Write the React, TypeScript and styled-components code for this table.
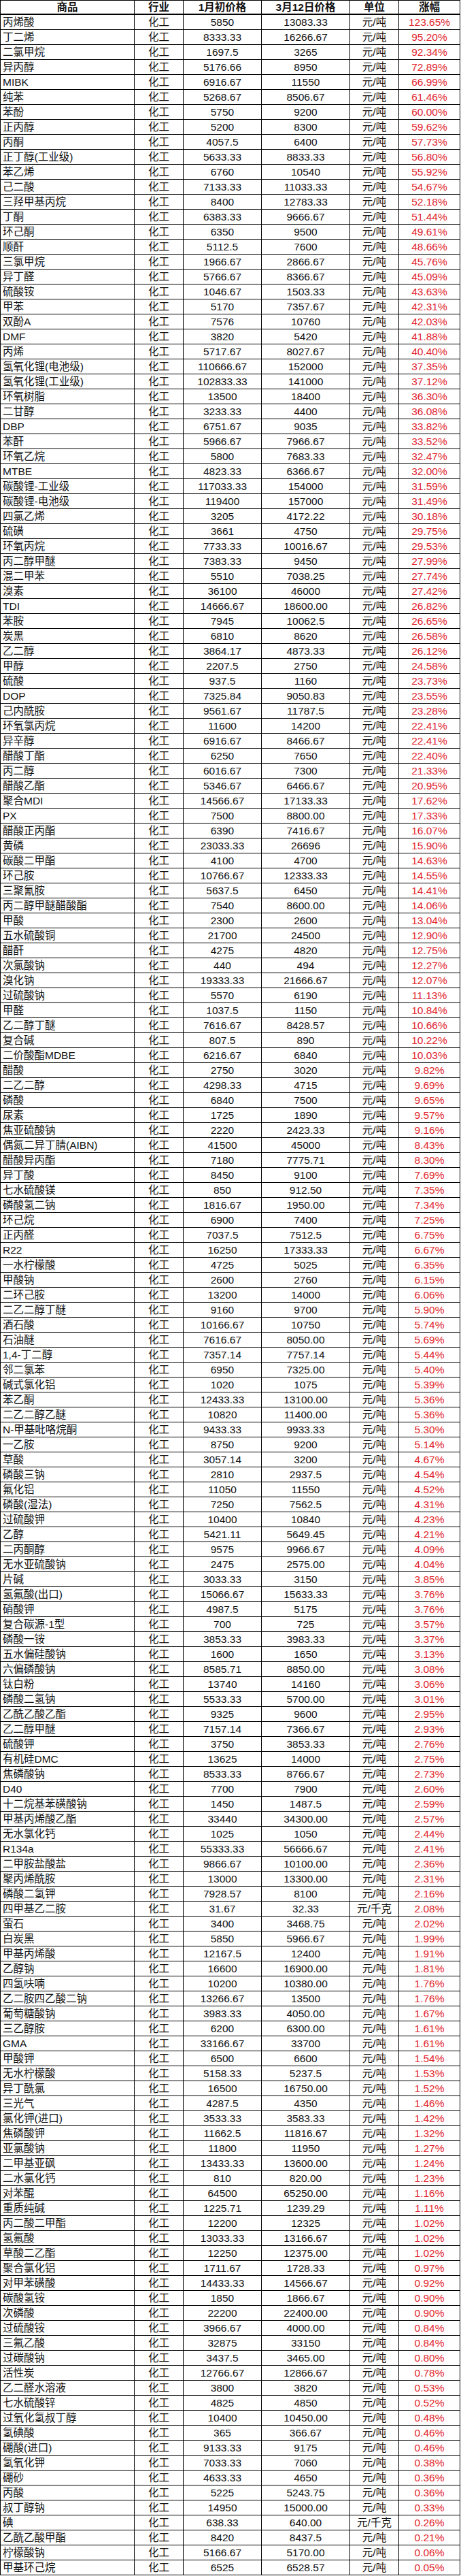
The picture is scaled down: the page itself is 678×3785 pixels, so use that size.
import type { FC } from "react";
import styled, { createGlobalStyle } from "styled-components";

const GlobalStyle = createGlobalStyle`
  html, body {
    margin: 0;
    padding: 0;
    background: #fff;
  }
  body {
    font-family: "Liberation Sans", "Noto Sans CJK SC", sans-serif;
    color: #000;
  }
`;

// 商品|1月初价格|3月12日价格|涨幅  (单位 defaults to 元/吨, "k" = 元/千克)
const RAW = `丙烯酸|5850|13083.33|123.65%
丁二烯|8333.33|16266.67|95.20%
二氯甲烷|1697.5|3265|92.34%
异丙醇|5176.66|8950|72.89%
MIBK|6916.67|11550|66.99%
纯苯|5268.67|8506.67|61.46%
苯酚|5750|9200|60.00%
正丙醇|5200|8300|59.62%
丙酮|4057.5|6400|57.73%
正丁醇(工业级)|5633.33|8833.33|56.80%
苯乙烯|6760|10540|55.92%
己二酸|7133.33|11033.33|54.67%
三羟甲基丙烷|8400|12783.33|52.18%
丁酮|6383.33|9666.67|51.44%
环己酮|6350|9500|49.61%
顺酐|5112.5|7600|48.66%
三氯甲烷|1966.67|2866.67|45.76%
异丁醛|5766.67|8366.67|45.09%
硫酸铵|1046.67|1503.33|43.63%
甲苯|5170|7357.67|42.31%
双酚A|7576|10760|42.03%
DMF|3820|5420|41.88%
丙烯|5717.67|8027.67|40.40%
氢氧化锂(电池级)|110666.67|152000|37.35%
氢氧化锂(工业级)|102833.33|141000|37.12%
环氧树脂|13500|18400|36.30%
二甘醇|3233.33|4400|36.08%
DBP|6751.67|9035|33.82%
苯酐|5966.67|7966.67|33.52%
环氧乙烷|5800|7683.33|32.47%
MTBE|4823.33|6366.67|32.00%
碳酸锂-工业级|117033.33|154000|31.59%
碳酸锂-电池级|119400|157000|31.49%
四氯乙烯|3205|4172.22|30.18%
硫磺|3661|4750|29.75%
环氧丙烷|7733.33|10016.67|29.53%
丙二醇甲醚|7383.33|9450|27.99%
混二甲苯|5510|7038.25|27.74%
溴素|36100|46000|27.42%
TDI|14666.67|18600.00|26.82%
苯胺|7945|10062.5|26.65%
炭黑|6810|8620|26.58%
乙二醇|3864.17|4873.33|26.12%
甲醇|2207.5|2750|24.58%
硫酸|937.5|1160|23.73%
DOP|7325.84|9050.83|23.55%
己内酰胺|9561.67|11787.5|23.28%
环氧氯丙烷|11600|14200|22.41%
异辛醇|6916.67|8466.67|22.41%
醋酸丁酯|6250|7650|22.40%
丙二醇|6016.67|7300|21.33%
醋酸乙酯|5346.67|6466.67|20.95%
聚合MDI|14566.67|17133.33|17.62%
PX|7500|8800.00|17.33%
醋酸正丙酯|6390|7416.67|16.07%
黄磷|23033.33|26696|15.90%
碳酸二甲酯|4100|4700|14.63%
环己胺|10766.67|12333.33|14.55%
三聚氰胺|5637.5|6450|14.41%
丙二醇甲醚醋酸酯|7540|8600.00|14.06%
甲酸|2300|2600|13.04%
五水硫酸铜|21700|24500|12.90%
醋酐|4275|4820|12.75%
次氯酸钠|440|494|12.27%
溴化钠|19333.33|21666.67|12.07%
过硫酸钠|5570|6190|11.13%
甲醛|1037.5|1150|10.84%
乙二醇丁醚|7616.67|8428.57|10.66%
复合碱|807.5|890|10.22%
二价酸酯MDBE|6216.67|6840|10.03%
醋酸|2750|3020|9.82%
二乙二醇|4298.33|4715|9.69%
磷酸|6840|7500|9.65%
尿素|1725|1890|9.57%
焦亚硫酸钠|2220|2423.33|9.16%
偶氮二异丁腈(AIBN)|41500|45000|8.43%
醋酸异丙酯|7180|7775.71|8.30%
异丁酸|8450|9100|7.69%
七水硫酸镁|850|912.50|7.35%
磷酸氢二钠|1816.67|1950.00|7.34%
环己烷|6900|7400|7.25%
正丙醛|7037.5|7512.5|6.75%
R22|16250|17333.33|6.67%
一水柠檬酸|4725|5025|6.35%
甲酸钠|2600|2760|6.15%
二环己胺|13200|14000|6.06%
二乙二醇丁醚|9160|9700|5.90%
酒石酸|10166.67|10750|5.74%
石油醚|7616.67|8050.00|5.69%
1,4-丁二醇|7357.14|7757.14|5.44%
邻二氯苯|6950|7325.00|5.40%
碱式氯化铝|1020|1075|5.39%
苯乙酮|12433.33|13100.00|5.36%
二乙二醇乙醚|10820|11400.00|5.36%
N-甲基吡咯烷酮|9433.33|9933.33|5.30%
一乙胺|8750|9200|5.14%
草酸|3057.14|3200|4.67%
磷酸三钠|2810|2937.5|4.54%
氟化铝|11050|11550|4.52%
磷酸(湿法)|7250|7562.5|4.31%
过硫酸钾|10400|10840|4.23%
乙醇|5421.11|5649.45|4.21%
二丙酮醇|9575|9966.67|4.09%
无水亚硫酸钠|2475|2575.00|4.04%
片碱|3033.33|3150|3.85%
氢氟酸(出口)|15066.67|15633.33|3.76%
硝酸钾|4987.5|5175|3.76%
复合碳源-1型|700|725|3.57%
磷酸一铵|3853.33|3983.33|3.37%
五水偏硅酸钠|1600|1650|3.13%
六偏磷酸钠|8585.71|8850.00|3.08%
钛白粉|13740|14160|3.06%
磷酸二氢钠|5533.33|5700.00|3.01%
乙酰乙酸乙酯|9325|9600|2.95%
乙二醇甲醚|7157.14|7366.67|2.93%
硫酸钾|3750|3853.33|2.76%
有机硅DMC|13625|14000|2.75%
焦磷酸钠|8533.33|8766.67|2.73%
D40|7700|7900|2.60%
十二烷基苯磺酸钠|1450|1487.5|2.59%
甲基丙烯酸乙酯|33440|34300.00|2.57%
无水氯化钙|1025|1050|2.44%
R134a|55333.33|56666.67|2.41%
二甲胺盐酸盐|9866.67|10100.00|2.36%
聚丙烯酰胺|13000|13300.00|2.31%
磷酸二氢钾|7928.57|8100|2.16%
四甲基乙二胺|31.67|32.33|2.08%|k
萤石|3400|3468.75|2.02%
白炭黑|5850|5966.67|1.99%
甲基丙烯酸|12167.5|12400|1.91%
乙醇钠|16600|16900.00|1.81%
四氢呋喃|10200|10380.00|1.76%
乙二胺四乙酸二钠|13266.67|13500|1.76%
葡萄糖酸钠|3983.33|4050.00|1.67%
三乙醇胺|6200|6300.00|1.61%
GMA|33166.67|33700|1.61%
甲酸钾|6500|6600|1.54%
无水柠檬酸|5158.33|5237.5|1.53%
异丁酰氯|16500|16750.00|1.52%
三光气|4287.5|4350|1.46%
氯化钾(进口)|3533.33|3583.33|1.42%
焦磷酸钾|11662.5|11816.67|1.32%
亚氯酸钠|11800|11950|1.27%
二甲基亚砜|13433.33|13600.00|1.24%
二水氯化钙|810|820.00|1.23%
对苯醌|64500|65250.00|1.16%
重质纯碱|1225.71|1239.29|1.11%
丙二酸二甲酯|12200|12325|1.02%
氢氟酸|13033.33|13166.67|1.02%
草酸二乙酯|12250|12375.00|1.02%
聚合氯化铝|1711.67|1728.33|0.97%
对甲苯磺酸|14433.33|14566.67|0.92%
碳酸氢铵|1850|1866.67|0.90%
次磷酸|22200|22400.00|0.90%
过硫酸铵|3966.67|4000.00|0.84%
三氟乙酸|32875|33150|0.84%
过碳酸钠|3437.5|3465.00|0.80%
活性炭|12766.67|12866.67|0.78%
乙二醛水溶液|3800|3820|0.53%
七水硫酸锌|4825|4850|0.52%
过氧化氢叔丁醇|10400|10450.00|0.48%
氢碘酸|365|366.67|0.46%
硼酸(进口)|9133.33|9175|0.46%
氢氧化钾|7033.33|7060|0.38%
硼砂|4633.33|4650|0.36%
丙酸|5225|5243.75|0.36%
叔丁醇钠|14950|15000.00|0.33%
碘|638.33|640.00|0.26%|k
乙酰乙酸甲酯|8420|8437.5|0.21%
柠檬酸钠|5166.67|5170.00|0.06%
甲基环己烷|6525|6528.57|0.05%`;

interface Item {
  name: string;
  start: string;
  end: string;
  change: string;
  unit: string;
}

const items: Item[] = RAW.split("\n").map((line) => {
  const [name, start, end, change, u] = line.split("|");
  return { name, start, end, change, unit: u === "k" ? "元/千克" : "元/吨" };
});

const COLS = "197px 72px 115px 130px 72px 90px";

const Sheet = styled.div`
  width: 677px;
  border-top: 1px solid #000;
  border-left: 1px solid #000;
  box-sizing: border-box;
`;

const Row = styled.div<{ $head?: boolean }>`
  display: grid;
  grid-template-columns: ${COLS};
  height: ${({ $head }) => ($head ? "21px" : "22px")};
  border-bottom: ${({ $head }) => ($head ? "2px" : "1px")} solid #000;
  box-sizing: border-box;
`;

const Cell = styled.div<{ $align?: "left" | "center"; $head?: boolean; $red?: boolean }>`
  display: flex;
  align-items: center;
  justify-content: ${({ $align }) => ($align === "left" ? "flex-start" : "center")};
  padding: ${({ $align }) => ($align === "left" ? "0 0 0 3px" : "0")};
  border-right: 1px solid #000;
  box-sizing: border-box;
  font-size: 15.5px;
  line-height: 1;
  white-space: nowrap;
  overflow: hidden;
  font-weight: ${({ $head }) => ($head ? 700 : 400)};
  color: ${({ $red }) => ($red ? "#e2262e" : "#111")};
`;

const Header: FC = () => (
  <Row $head>
    <Cell $head>商品</Cell>
    <Cell $head>行业</Cell>
    <Cell $head>1月初价格</Cell>
    <Cell $head>3月12日价格</Cell>
    <Cell $head>单位</Cell>
    <Cell $head>涨幅</Cell>
  </Row>
);

const App: FC = () => (
  <>
    <GlobalStyle />
    <Sheet>
      <Header />
      {items.map((it, i) => (
        <Row key={i}>
          <Cell $align="left">{it.name}</Cell>
          <Cell>化工</Cell>
          <Cell>{it.start}</Cell>
          <Cell>{it.end}</Cell>
          <Cell>{it.unit}</Cell>
          <Cell $red>{it.change}</Cell>
        </Row>
      ))}
    </Sheet>
  </>
);

export default App;
